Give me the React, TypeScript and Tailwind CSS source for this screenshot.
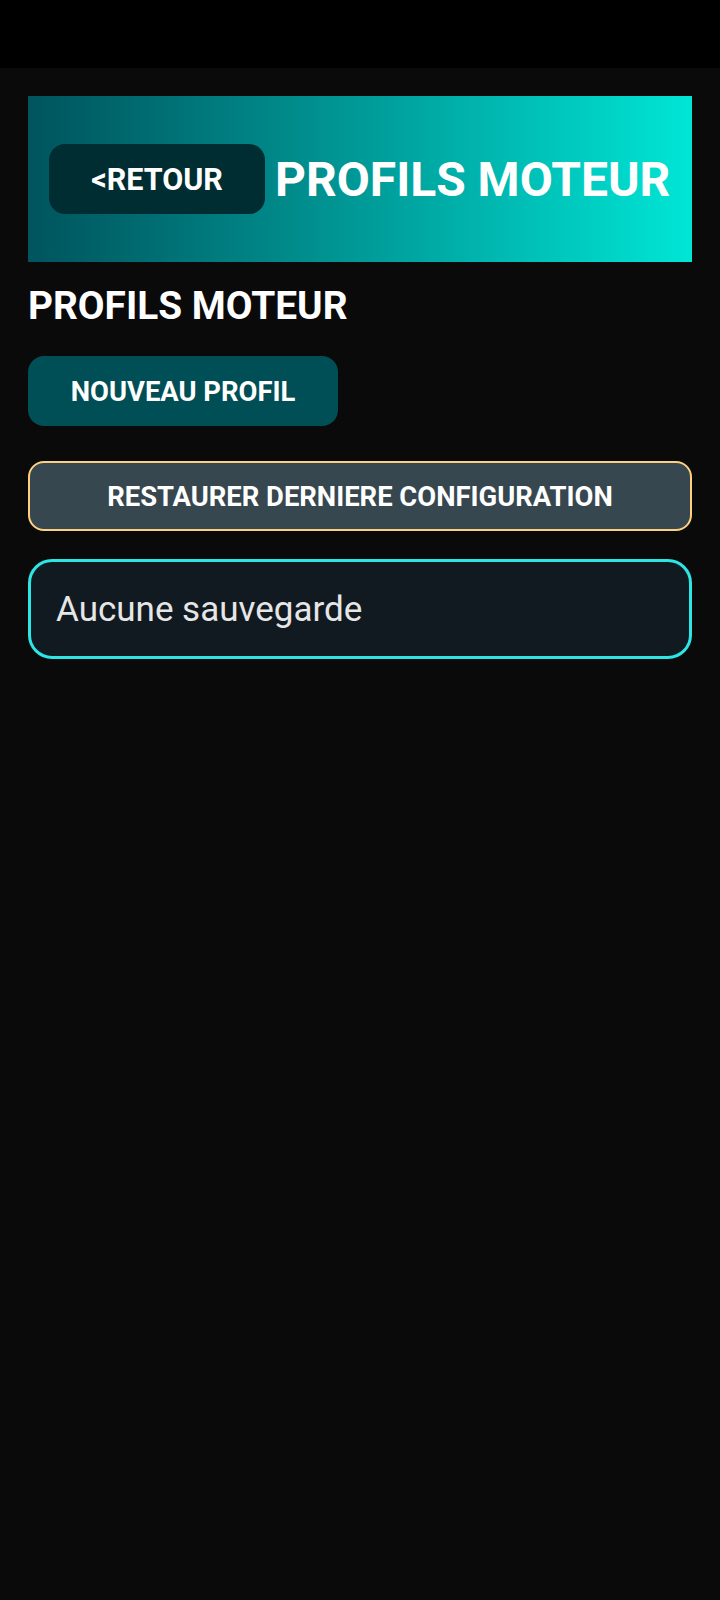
import React from "react";

export default function App() {
  return (
    <div
      className="min-h-[1600px] w-[720px] bg-[#0a0a0a] text-white"
      style={{ fontFamily: "Roboto, 'Noto Sans', sans-serif" }}
    >
      <div className="h-[68px] bg-black" />
      <div className="px-[28px] pt-[28px]">
        <div className="flex h-[166px] items-center bg-gradient-to-r from-[#00545d] to-[#00e6d6] pl-[21px]">
          <button className="flex h-[70px] w-[216px] items-center justify-center rounded-[16px] bg-[#002d32] pt-[2px] text-[30.5px] font-bold text-white">
            &lt;RETOUR
          </button>
          <div className="ml-[10px] pt-[2px] text-[48px] font-bold leading-none text-white">
            PROFILS MOTEUR
          </div>
        </div>
        <div className="mt-[22px] text-[38.8px] font-bold leading-[44px] text-white">
          PROFILS MOTEUR
        </div>
        <button className="mt-[28px] flex h-[70px] w-[310px] items-center justify-center rounded-[16px] bg-[#014f56] pt-[3px] text-[27.4px] font-bold text-white">
          NOUVEAU PROFIL
        </button>
        <button className="mt-[35px] flex h-[70px] w-full items-center justify-center rounded-[16px] border-2 border-[#ffcf80] bg-[#37474f] pt-[3px] text-[27.4px] font-bold text-white">
          RESTAURER DERNIERE CONFIGURATION
        </button>
        <div className="mt-[28px] flex h-[100px] items-center rounded-[24px] border-[3px] border-[#2ee5e5] bg-[#111a20] pl-[25px] pt-[3px] text-[35px] text-[#e6e6e6]">
          Aucune sauvegarde
        </div>
      </div>
    </div>
  );
}
